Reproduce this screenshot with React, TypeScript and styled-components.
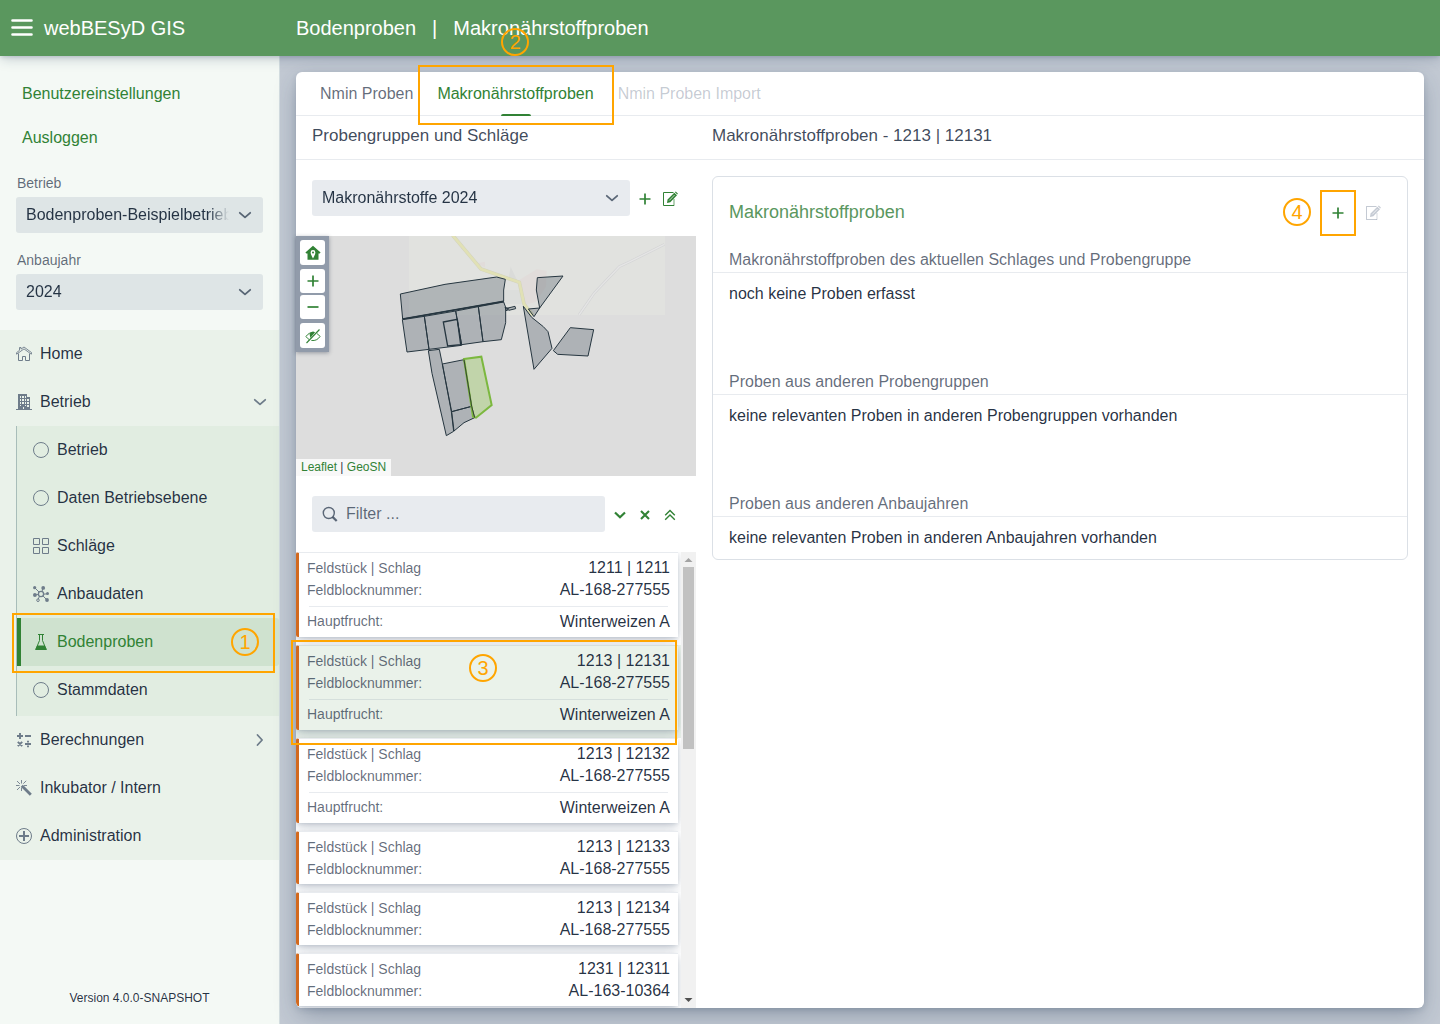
import React from "react";
import styled, { createGlobalStyle, css } from "styled-components";

const color = {
  header: "#5a975e",
  primary: "#318235",
  body: "hsla(214, 40%, 16%, 0.94)",
  title: "hsla(214, 40%, 18%, 0.85)",
  secondary: "hsla(214, 42%, 18%, 0.69)",
  disabled: "hsla(214, 50%, 22%, 0.26)",
  line: "hsla(214, 57%, 24%, 0.1)",
  field: "hsla(214, 57%, 24%, 0.1)",
  mark: "#ffa500",
};

const shadowS =
  "0 2px 4px -1px hsla(214, 53%, 23%, 0.16), 0 3px 12px -1px hsla(214, 50%, 22%, 0.26)";
const shadowM =
  "0 2px 6px -1px hsla(214, 53%, 23%, 0.16), 0 8px 24px -4px hsla(214, 47%, 21%, 0.38)";

const GlobalStyle = createGlobalStyle`
  *, *::before, *::after { box-sizing: border-box; }
  body {
    margin: 0;
    font-family: "Liberation Sans", Arial, sans-serif;
    font-size: 16px;
    line-height: 22px;
    color: ${color.body};
  }
  button, input, select { font: inherit; color: inherit; }
  a { text-decoration: none; }
`;

/* ---------- shell ---------- */

const Shell = styled.div`
  display: flex;
  flex-direction: column;
  height: 100vh;
  overflow: hidden;
`;

const Header = styled.header`
  display: flex;
  align-items: center;
  flex: none;
  height: 56px;
  background: ${color.header};
  color: #fff;
  font-size: 20px;
  line-height: 24px;
  position: relative;
  z-index: 1;
  box-shadow: ${shadowS};
`;

const Brand = styled.div`
  display: flex;
  align-items: center;
  width: 296px;
  padding-left: 10px;
  gap: 10px;
`;

const MenuButton = styled.button`
  display: flex;
  padding: 0;
  border: 0;
  background: none;
`;

const Crumbs = styled.div`
  display: flex;
  gap: 16px;
`;

const Body = styled.div`
  display: flex;
  flex: 1;
  min-height: 0;
  background: #c2c9d3;
`;

/* ---------- sidebar ---------- */

const Sidebar = styled.aside`
  display: flex;
  flex-direction: column;
  flex: none;
  width: 280px;
  background: #f4f9f5;
  border-right: 1px solid #d3dde0;
`;

const UserLinks = styled.div`
  display: flex;
  flex-direction: column;
  gap: 22px;
  padding: 27px 22px 24px;
  a { color: ${color.primary}; }
`;

const FieldBlock = styled.div`
  display: flex;
  flex-direction: column;
  padding: 0 16px 17px;
  label {
    padding-left: 1px;
    font-size: 14px;
    line-height: 20px;
    margin-bottom: 4px;
    color: ${color.secondary};
  }
`;

const SelectBox = styled.div<{ $grow?: boolean }>`
  display: flex;
  align-items: center;
  gap: 8px;
  height: 36px;
  padding: 0 10px;
  background: ${color.field};
  border-radius: 3px;
  ${(p) => p.$grow && css`flex: 1; min-width: 0;`}
`;

const Select = styled.select`
  flex: 1;
  min-width: 0;
  height: 36px;
  padding: 0;
  border: 0;
  background: none;
  appearance: none;
  mask-image: linear-gradient(to left, transparent, #000 20px);
`;

const Nav = styled.nav`
  display: flex;
  flex-direction: column;
  margin-top: 3px;
  background: #eaf2ea;
`;

const SubNav = styled.div`
  display: flex;
  flex-direction: column;
  margin-left: 16px;
  padding-bottom: 2px;
  background: #e1ede1;
  border-left: 1px solid #a8bdb9;
`;

const NavItem = styled.a<{ $active?: boolean }>`
  display: flex;
  align-items: center;
  gap: 8px;
  height: 48px;
  padding: 0 11px 0 16px;
  color: ${color.body};
  svg { color: #6e7c8a; flex: none; }
  ${(p) =>
    p.$active &&
    css`
      position: relative;
      padding-left: 12px;
      border-left: 4px solid ${color.primary};
      background: #cfe2cf;
      border-radius: 0 3px 3px 0;
      &, svg { color: ${color.primary}; }
    `}
`;

const NavText = styled.span`
  flex: 1;
`;

const Version = styled.div`
  margin-top: auto;
  padding-bottom: 16px;
  text-align: center;
  font-size: 12px;
  line-height: 20px;
`;

/* ---------- main panel ---------- */

const Main = styled.main`
  display: flex;
  flex: 1;
  min-width: 0;
  padding: 16px;
`;

const Panel = styled.div`
  display: flex;
  flex-direction: column;
  flex: 1;
  min-width: 0;
  background: #fff;
  border-radius: 6px;
  box-shadow: ${shadowM};
`;

const Tabs = styled.div`
  display: flex;
  flex: none;
  height: 44px;
  padding-left: 12px;
  border-bottom: 1px solid ${color.line};
`;

const Tab = styled.button<{ $active?: boolean }>`
  position: relative;
  padding: 0 12px;
  border: 0;
  background: none;
  color: ${(p) => (p.$active ? color.primary : color.secondary)};
  &:disabled { color: ${color.disabled}; }
  ${(p) =>
    p.$active &&
    css`
      &::after {
        content: "";
        position: absolute;
        left: 50%;
        bottom: -1px;
        width: 30px;
        height: 2px;
        margin-left: -15px;
        background: ${color.primary};
        border-radius: 2px 2px 0 0;
      }
    `}
`;

const TitleBar = styled.div`
  display: flex;
  flex: none;
  height: 44px;
  padding: 9px 16px 0;
  border-bottom: 1px solid ${color.line};
`;

const Title = styled.h2`
  flex: 1;
  margin: 0;
  font-size: 17px;
  line-height: 22px;
  font-weight: 400;
  color: ${color.title};
  &:first-child { flex: 0 0 400px; }
`;

const Columns = styled.div`
  display: flex;
  flex: 1;
  min-height: 0;
`;

const LeftColumn = styled.section`
  display: flex;
  flex-direction: column;
  flex: 0 0 400px;
  min-height: 0;
`;

const RightColumn = styled.section`
  flex: 1;
  min-width: 0;
  padding: 16px;
`;

const Toolbar = styled.div`
  display: flex;
  align-items: center;
  flex: none;
  padding: 20px 14px 20px 16px;
`;

const ToolGroup = styled.div`
  display: flex;
  margin-left: 2px;
`;

const IconButton = styled.button`
  display: flex;
  align-items: center;
  justify-content: center;
  width: 25px;
  height: 36px;
  padding: 2px 0 0;
  border: 0;
  background: none;
  color: ${color.primary};
  &:disabled { color: ${color.disabled}; }
`;

const FilterBox = styled.label`
  display: flex;
  align-items: center;
  flex: 1;
  min-width: 0;
  gap: 8px;
  height: 36px;
  padding: 0 10px;
  background: ${color.field};
  border-radius: 3px;
  color: ${color.secondary};
  input {
    flex: 1;
    min-width: 0;
    padding: 0;
    border: 0;
    background: none;
    outline: none;
  }
  input::placeholder { color: ${color.secondary}; opacity: 1; }
`;

/* ---------- map ---------- */

const MapBox = styled.div`
  position: relative;
  flex: none;
  height: 240px;
  background: #ddd;
`;

const MapDrawing = styled.svg`
  display: block;
  width: 100%;
  height: 100%;
`;

const MapControls = styled.div`
  position: absolute;
  left: 0;
  top: 0;
  display: flex;
  flex-direction: column;
  gap: 4px;
  padding: 4px;
  background: #919baa;
  box-shadow: 0 1px 4px rgba(40, 50, 70, 0.4);
`;

const ZoomGroup = styled.div`
  display: flex;
  flex-direction: column;
  gap: 2px;
`;

const MapButton = styled.button<{ $short?: boolean }>`
  display: flex;
  align-items: center;
  justify-content: center;
  width: 25px;
  height: ${(p) => (p.$short ? 24 : 25)}px;
  padding: 0;
  border: 0;
  border-radius: 3px;
  background: #fff;
  color: ${color.primary};
`;

const Attribution = styled.div`
  position: absolute;
  left: 0;
  bottom: 0;
  padding: 0 5px;
  background: rgba(255, 255, 255, 0.8);
  font-size: 12px;
  line-height: 17px;
  a { color: ${color.primary}; }
`;

/* ---------- field list ---------- */

const ListArea = styled.div`
  position: relative;
  display: flex;
  flex: 1;
  min-height: 0;
`;

const List = styled.ul`
  flex: 1;
  margin: 0;
  padding: 0;
  list-style: none;
  overflow: hidden;
  border-bottom-left-radius: 6px;
`;

const ListItem = styled.li<{ $selected?: boolean }>`
  padding: 0 3px 8px 0;
  background: ${(p) => (p.$selected ? "#eaf2ea" : "#fff")};
`;

const FieldCard = styled.article`
  padding: 4px 8px;
  border-left: 3px solid #d2691e;
  border-top: 1px solid ${color.line};
  border-radius: 2px 0 0 2px;
  box-shadow: ${shadowS};
`;

const CardRow = styled.div`
  display: flex;
  justify-content: space-between;
  height: 22px;
`;

const CardLabel = styled.span`
  font-size: 14px;
  color: ${color.secondary};
`;

const CropRow = styled(CardRow)`
  ${CardLabel} { line-height: 20px; }
`;

const CardRule = styled.hr`
  height: 1px;
  margin: 5px 2px 4px;
  border: 0;
  background: ${color.line};
`;

const ScrollTrack = styled.div`
  display: flex;
  flex-direction: column;
  align-items: center;
  width: 15px;
  background: #f1f1f1;
  svg { flex: none; }
`;

const ScrollThumb = styled.div`
  width: 11px;
  height: 40%;
  background: #c1c1c1;
  margin-bottom: auto;
`;

/* ---------- samples card ---------- */

const SampleCard = styled.section`
  border: 1px solid #dbe0e6;
  border-radius: 6px;
  padding-bottom: 10px;
`;

const SampleHead = styled.div`
  display: flex;
  align-items: center;
  justify-content: space-between;
  padding: 17px 22px 0 16px;
  h3 {
    margin: 0;
    font-size: 18px;
    font-weight: 400;
    color: ${color.header};
  }
`;

const SampleActions = styled.div`
  display: flex;
  gap: 10px;
`;

const Anchor = styled.span`
  position: relative;
`;

const SampleSection = styled.div<{ $last?: boolean }>`
  h4 {
    margin: 0;
    padding: 19px 16px 1px;
    border-bottom: 1px solid ${color.line};
    font-size: 16px;
    font-weight: 400;
    color: ${color.secondary};
  }
  p {
    margin: 0;
    padding: 10px 16px 0;
    min-height: ${(p) => (p.$last ? 32 : 79)}px;
  }
`;

/* ---------- numbered markers ---------- */

const MarkFrame = styled.span<{ $t: number; $r: number; $b: number; $l: number }>`
  position: absolute;
  z-index: 5;
  top: ${(p) => p.$t}px;
  right: ${(p) => p.$r}px;
  bottom: ${(p) => p.$b}px;
  left: ${(p) => p.$l}px;
  border: 2px solid ${color.mark};
  pointer-events: none;
`;

const MarkNumber = styled.span<{ $x: number; $y: number }>`
  position: absolute;
  z-index: 5;
  left: ${(p) => p.$x}px;
  top: ${(p) => p.$y}px;
  width: 28px;
  height: 28px;
  border: 2px solid ${color.mark};
  border-radius: 50%;
  color: ${color.mark};
  font-size: 20px;
  line-height: 24px;
  text-align: center;
  pointer-events: none;
`;

const ListMark = styled.div`
  position: absolute;
  top: 88px;
  left: -5px;
  right: 19px;
  height: 105px;
  pointer-events: none;
`;

/* ---------- icons ---------- */

type IconProps = { size?: number; children: React.ReactNode };

const Icon = ({ size = 16, children }: IconProps) => (
  <svg width={size} height={size} viewBox="0 0 16 16" fill="none" stroke="currentColor" aria-hidden="true">
    {children}
  </svg>
);

const ChevronDown = () => (
  <Icon><path d="M2.800 5.800 8 10.400l5.200-4.600" strokeWidth="1.800" strokeLinecap="round" strokeLinejoin="round" /></Icon>
);
const ChevronRight = () => (
  <Icon><path d="m5.500 3 4.600 5-4.600 5" strokeWidth="1.800" strokeLinecap="round" strokeLinejoin="round" /></Icon>
);
const PlusIcon = () => (
  <Icon><path d="M8 2.500v11M2.500 8h11" strokeWidth="1.700" /></Icon>
);
const MinusIcon = () => (
  <Icon><path d="M2.500 8h11" strokeWidth="1.700" /></Icon>
);
const EditIcon = () => (
  <Icon>
    <path d="M11.500 1.500h-10v13h10.500" />
    <path d="M12 14.800V8" strokeWidth="1.200" opacity=".6" />
    <path d="M5 12 5.600 8.600 12.300 1.800 15 4.300 8.300 11.200z" fill="currentColor" stroke="none" />
    <path d="m12.900 1.200.8-.7L15.900 2.600l-.700.9z" fill="currentColor" stroke="none" />
    <path d="M7.200 9.500 12.600 4" stroke="#fff" strokeWidth=".7" />
  </Icon>
);
const HomeIcon = () => (
  <Icon>
    <path d="M.6 8.200.3 6.900 3.500 4.300V1.500h1.500v1.600L8 1l7.700 5.700-.4 1.500L8 2.900z" strokeWidth=".9" />
    <path d="M2.500 7.500v7h4v-4h3v4h4v-7" />
  </Icon>
);
const BuildingIcon = () => (
  <svg width="16" height="16" viewBox="0 0 16 16" fill="currentColor" aria-hidden="true">
    <path
      fillRule="evenodd"
      d="M2 0h9v3h3v12h2v1H0v-1h2zM4 2v2h1V2zM6 2v2h2V2zM9 2v2h1V2zM4 5v2h1V5zM6 5v2h2V5zM9 5v2h1V5zM11 5v2h2V5zM4 8v2h1V8zM6 8v2h2V8zM9 8v2h1V8zM11 8v2h2V8zM4 11v1h1v-1zM9 11v1h1v-1zM11 11v2h2v-2zM7 13v2h1v-2z"
    />
  </svg>
);
const CircleIcon = () => (
  <Icon><circle cx="8" cy="8" r="7.500" /></Icon>
);
const GridIcon = () => (
  <Icon><path d="M.5.5h6v6h-6zM9.500.5h6v6h-6zM.5 9.500h6v6h-6zM9.500 9.500h6v6h-6z" /></Icon>
);
const ClusterIcon = () => (
  <Icon>
    <circle cx="8" cy="8" r="2.600" strokeWidth="1.300" />
    <path d="M6 6 2 2M9 5.500 10 2M10.500 8.200 15 7.700M9.900 9.800l3.300 3.400M6.500 10.200 5.300 13M5.500 8.400 2 9" />
    <g fill="currentColor" stroke="none">
      <circle cx="1.700" cy="1.700" r="1.600" />
      <circle cx="10.200" cy="1.900" r="1.900" />
      <circle cx="14.500" cy="7.500" r="1.500" />
      <circle cx="1.900" cy="9" r="1.900" />
      <circle cx="14" cy="14" r="1.900" />
    </g>
    <circle cx="5" cy="14.200" r="1.300" />
  </Icon>
);
const FlaskIcon = () => (
  <Icon>
    <path d="M5 .5h6M6.500.5v6L3 15h10L9.500 6.500v-6" />
    <path d="M4.200 11.500h7.600L14 16H2z" fill="currentColor" stroke="none" />
  </Icon>
);
const CalcIcon = () => (
  <Icon>
    <path d="M4 1v6M1 4h6M9 4h6M1.800 9.800l4.400 4.400M6.200 9.800l-4.400 4.400M9 12h6" strokeWidth="1.900" />
    <path d="M12 8.800v1.700M12 13.500v1.700" strokeWidth="1.900" />
  </Icon>
);
const WandIcon = () => (
  <Icon>
    <path d="M5.500 0v3.500M5.500 7.500V11M0 5.500h3.500M8 5.500h3M1 1l3 3M10.200.8 7.300 3.700M1 10l3-3" strokeWidth=".9" />
    <path d="m5.800 5.800 9 9" strokeWidth="2.800" />
  </Icon>
);
const PlusCircleIcon = () => (
  <Icon><circle cx="8" cy="8" r="7.500" /><path d="M8 3v10M3 8h10" strokeWidth="2" /></Icon>
);
const SearchIcon = () => (
  <Icon><circle cx="6.800" cy="7" r="5.500" strokeWidth="1.400" /><path d="m10.800 11.100 3.900 3.900" strokeWidth="2.200" /></Icon>
);
const HomePinIcon = () => (
  <svg width="16" height="16" viewBox="0 0 16 16" fill="currentColor" aria-hidden="true">
    <path d="M8 .8 15.600 7.500 14.600 8.600H13.500v6.200h-11V8.600H1.400L.4 7.500z" />
    <path d="M8 13.500C7 11.500 5.600 9.300 5.600 7.400a2.400 2.400 0 0 1 4.800 0C10.400 9.300 9 11.500 8 13.500z" fill="#fff" />
    <circle cx="8" cy="7.400" r="1" />
  </svg>
);
const HiddenIcon = () => (
  <Icon>
    <path d="M1 8.500C3 5.500 5.500 4.500 8 4.500s5 1 7 4c-2 3-4.500 4-7 4s-5-1-7-4z" />
    <path d="M5 8a3 3 0 0 0 1.500 3L10.500 5.500A3 3 0 0 0 5 8z" fill="currentColor" stroke="none" />
    <path d="M2.500 15 14 1.500" stroke="#fff" strokeWidth="2.400" />
    <path d="M1.500 15 14.500 1.500" strokeWidth="1.100" />
  </Icon>
);

/* ---------- data ---------- */

const subItems = [
  { label: "Betrieb", icon: <CircleIcon /> },
  { label: "Daten Betriebsebene", icon: <CircleIcon /> },
  { label: "Schläge", icon: <GridIcon /> },
  { label: "Anbaudaten", icon: <ClusterIcon /> },
  { label: "Bodenproben", icon: <FlaskIcon />, active: true },
  { label: "Stammdaten", icon: <CircleIcon /> },
];

const fields = [
  { id: "1211 | 1211", block: "AL-168-277555", crop: "Winterweizen A" },
  { id: "1213 | 12131", block: "AL-168-277555", crop: "Winterweizen A", selected: true },
  { id: "1213 | 12132", block: "AL-168-277555", crop: "Winterweizen A" },
  { id: "1213 | 12133", block: "AL-168-277555" },
  { id: "1213 | 12134", block: "AL-168-277555" },
  { id: "1231 | 12311", block: "AL-163-10364" },
];

const samples = [
  { title: "Makronährstoffproben des aktuellen Schlages und Probengruppe", text: "noch keine Proben erfasst" },
  { title: "Proben aus anderen Probengruppen", text: "keine relevanten Proben in anderen Probengruppen vorhanden" },
  { title: "Proben aus anderen Anbaujahren", text: "keine relevanten Proben in anderen Anbaujahren vorhanden" },
];

const parcels = [
  "31,192 165,163 320,141 346,148 341,180 341,214 38,267",
  "37,269 103,259 117,358 51,366",
  "103,259 197,243 215,346 117,358",
  "197,243 265,230 279,335 215,344",
  "265,230 341,216 347,232 347,278 334,329 279,335",
  "345,232 350,243 356,236",
  "350,235 375,229 377,236 356,241",
  "115,362 148,358 157,402 184,545 191,604 169,617 126,430",
  "157,402 222,389 245,529 185,545",
  "185,545 245,529 254,563 222,578 192,603",
  "442,143 519,138 449,234 439,180",
  "415,237 449,234 432,260",
  "400,229 425,262 460,290 474,305 486,355 432,418",
  "541,293 611,299 594,378 503,373 490,362",
];

const FieldMap = () => (
  <MapDrawing viewBox="-282 18 1200 720" preserveAspectRatio="xMidYMid slice" role="img" aria-label="Schlagkarte">
    <rect x="57" y="18" width="768" height="237" fill="#e1e2df" />
    <path d="M388 150 440 118 470 122 468 170 438 215 405 225z M260 100 285 95 285 112z" fill="#e1dcda" />
    <path d="M355 150 362 110 382 152z" fill="#dadbd9" />
    <path d="M345 180H395V222H345z" fill="#dcdedc" />
    <path d="M823 43 720 95 688 110 612 190 567 255" fill="none" stroke="#d3d4d5" strokeWidth="8" />
    <path d="M823 43 720 95 688 110 612 190 567 255" fill="none" stroke="#e5e5e5" strokeWidth="4" />
    <path d="M188 16 273 117 388 157 402 222 428 256" fill="none" stroke="#d3d3bd" strokeWidth="11" />
    <path d="M188 16 273 117 388 157 402 222 428 256" fill="none" stroke="#e1e1b5" strokeWidth="8" />
    <g fill="#263746" fillOpacity=".26" stroke="#263640" strokeWidth="3" strokeLinejoin="round">
      {parcels.map((p) => <polygon key={p} points={p} />)}
    </g>
    <polygon points="160,276 202,268 212,344 173,348" fill="none" stroke="#263640" strokeWidth="4" />
    <path d="M38 267 341 214" stroke="#263640" strokeWidth="5" />
    <polygon points="222,387 274,380 305,525 258,563 249,560" fill="#8bc34a" fillOpacity=".35" stroke="#7cb83f" strokeWidth="6" />
    <path d="M222 389 245 529 254 563" fill="none" stroke="#33452f" strokeWidth="3" />
  </MapDrawing>
);

const GreyWrap = styled.span`
  display: flex;
  color: ${color.secondary};
`;

const ChevronGrey = () => (
  <GreyWrap><ChevronDown /></GreyWrap>
);

export default function App() {
  return (
    <Shell>
      <GlobalStyle />
      <Header>
        <Brand>
          <MenuButton aria-label="Menü">
            <svg width="24" height="24" viewBox="0 0 24 24" stroke="#fff" strokeWidth="2.600" strokeLinecap="round">
              <path d="M2.500 4.500h19M2.500 11.500h19M2.500 18.500h19" />
            </svg>
          </MenuButton>
          <span>webBESyD GIS</span>
        </Brand>
        <Crumbs>
          <span>Bodenproben</span>
          <span>|</span>
          <span>Makronährstoffproben</span>
        </Crumbs>
      </Header>

      <Body>
        <Sidebar>
          <UserLinks>
            <a href="#einstellungen">Benutzereinstellungen</a>
            <a href="#ausloggen">Ausloggen</a>
          </UserLinks>
          <FieldBlock>
            <label htmlFor="betrieb">Betrieb</label>
            <SelectBox>
              <Select id="betrieb"><option>Bodenproben-Beispielbetrieb</option></Select>
              <ChevronGrey />
            </SelectBox>
          </FieldBlock>
          <FieldBlock>
            <label htmlFor="jahr">Anbaujahr</label>
            <SelectBox>
              <Select id="jahr"><option>2024</option></Select>
              <ChevronGrey />
            </SelectBox>
          </FieldBlock>
          <Nav>
            <NavItem href="#home"><HomeIcon /><NavText>Home</NavText></NavItem>
            <NavItem href="#betrieb"><BuildingIcon /><NavText>Betrieb</NavText><ChevronDown /></NavItem>
            <SubNav>
              {subItems.map((item) => (
                <NavItem key={item.label} href={"#" + item.label} $active={item.active}>
                  {item.icon}
                  <NavText>{item.label}</NavText>
                  {item.active && (
                    <>
                      <MarkFrame $t={-5} $r={4} $b={-7} $l={-9} />
                      <MarkNumber $x={210} $y={10}>1</MarkNumber>
                    </>
                  )}
                </NavItem>
              ))}
            </SubNav>
            <NavItem href="#berechnungen"><CalcIcon /><NavText>Berechnungen</NavText><ChevronRight /></NavItem>
            <NavItem href="#inkubator"><WandIcon /><NavText>Inkubator / Intern</NavText></NavItem>
            <NavItem href="#administration"><PlusCircleIcon /><NavText>Administration</NavText></NavItem>
          </Nav>
          <Version>Version 4.0.0-SNAPSHOT</Version>
        </Sidebar>

        <Main>
          <Panel>
            <Tabs>
              <Tab>Nmin Proben</Tab>
              <Tab $active>
                Makronährstoffproben
                <MarkFrame $t={-7} $r={-8} $b={-10} $l={-7} />
                <MarkNumber $x={76} $y={-44}>2</MarkNumber>
              </Tab>
              <Tab disabled>Nmin Proben Import</Tab>
            </Tabs>
            <TitleBar>
              <Title>Probengruppen und Schläge</Title>
              <Title>Makronährstoffproben - 1213 | 12131</Title>
            </TitleBar>
            <Columns>
              <LeftColumn>
                <Toolbar>
                  <SelectBox $grow>
                    <Select aria-label="Probengruppe"><option>Makronährstoffe 2024</option></Select>
                    <ChevronGrey />
                  </SelectBox>
                  <ToolGroup>
                    <IconButton aria-label="Neu"><PlusIcon /></IconButton>
                    <IconButton aria-label="Bearbeiten"><EditIcon /></IconButton>
                  </ToolGroup>
                </Toolbar>

                <MapBox>
                  <FieldMap />
                  <MapControls>
                    <MapButton aria-label="Standort"><HomePinIcon /></MapButton>
                    <ZoomGroup>
                      <MapButton $short aria-label="Vergrößern"><PlusIcon /></MapButton>
                      <MapButton $short aria-label="Verkleinern"><MinusIcon /></MapButton>
                    </ZoomGroup>
                    <MapButton aria-label="Ausblenden"><HiddenIcon /></MapButton>
                  </MapControls>
                  <Attribution>
                    <a href="#leaflet">Leaflet</a> | <a href="#geosn">GeoSN</a>
                  </Attribution>
                </MapBox>

                <Toolbar>
                  <FilterBox>
                    <SearchIcon />
                    <input type="text" placeholder="Filter ..." aria-label="Filter" />
                  </FilterBox>
                  <ToolGroup>
                    <IconButton aria-label="Aufklappen">
                      <Icon><path d="m3 5.500 5 4.800 5-4.800" strokeWidth="2.200" /></Icon>
                    </IconButton>
                    <IconButton aria-label="Zurücksetzen">
                      <Icon><path d="m4 4 8 8M12 4l-8 8" strokeWidth="2.100" /></Icon>
                    </IconButton>
                    <IconButton aria-label="Zuklappen">
                      <Icon><path d="m3.200 8.200 4.800-4.700 4.800 4.700M3.200 12.700 8 8l4.800 4.700" strokeWidth="1.400" /></Icon>
                    </IconButton>
                  </ToolGroup>
                </Toolbar>

                <ListArea>
                  <List>
                    {fields.map((f) => (
                      <ListItem key={f.id} $selected={f.selected}>
                        <FieldCard>
                          <CardRow><CardLabel>Feldstück | Schlag</CardLabel><span>{f.id}</span></CardRow>
                          <CardRow><CardLabel>Feldblocknummer:</CardLabel><span>{f.block}</span></CardRow>
                          {f.crop && (
                            <>
                              <CardRule />
                              <CropRow><CardLabel>Hauptfrucht:</CardLabel><span>{f.crop}</span></CropRow>
                            </>
                          )}
                        </FieldCard>
                      </ListItem>
                    ))}
                  </List>
                  <ScrollTrack>
                    <svg width="15" height="15" viewBox="0 0 15 15" aria-hidden="true"><path d="M3.500 10h8l-4-4z" fill="#a3a3a3" /></svg>
                    <ScrollThumb />
                    <svg width="15" height="15" viewBox="0 0 15 15" aria-hidden="true"><path d="M3.500 5h8l-4 4z" fill="#505050" /></svg>
                  </ScrollTrack>
                  <ListMark>
                    <MarkFrame $t={0} $r={0} $b={0} $l={0} />
                    <MarkNumber $x={178} $y={14}>3</MarkNumber>
                  </ListMark>
                </ListArea>
              </LeftColumn>

              <RightColumn>
                <SampleCard>
                  <SampleHead>
                    <h3>Makronährstoffproben</h3>
                    <SampleActions>
                      <Anchor>
                        <IconButton aria-label="Probe hinzufügen"><PlusIcon /></IconButton>
                        <MarkNumber $x={-42} $y={4}>4</MarkNumber>
                        <MarkFrame $t={-4} $r={-6} $b={-6} $l={-5} />
                      </Anchor>
                      <IconButton disabled aria-label="Probe bearbeiten"><EditIcon /></IconButton>
                    </SampleActions>
                  </SampleHead>
                  {samples.map((s, i) => (
                    <SampleSection key={s.title} $last={i === samples.length - 1}>
                      <h4>{s.title}</h4>
                      <p>{s.text}</p>
                    </SampleSection>
                  ))}
                </SampleCard>
              </RightColumn>
            </Columns>
          </Panel>
        </Main>
      </Body>
    </Shell>
  );
}
